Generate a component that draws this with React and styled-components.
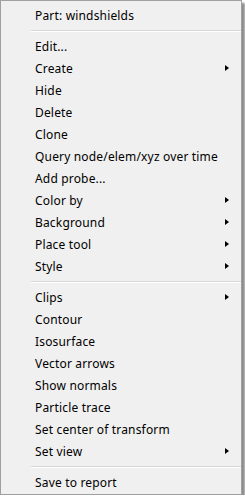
import React from "react";
import styled, { createGlobalStyle } from "styled-components";

const GlobalStyle = createGlobalStyle`
  html, body {
    margin: 0;
    padding: 0;
    background: #ffffff;
  }
`;

const Menu = styled.div`
  width: 242px;
  box-sizing: border-box;
  background: #f0f0f0;
  border: 1px solid #a0a0a0;
  box-shadow: 3px 3px 2px rgba(0, 0, 0, 0.45);
  padding: 3px 0 1px;
  font-family: "Noto Sans", "Open Sans", sans-serif;
  font-size: 12px;
  letter-spacing: 0.17px;
  color: #000000;
  display: flex;
  flex-direction: column;
`;

const Item = styled.div`
  height: 22px;
  display: flex;
  align-items: center;
  justify-content: space-between;
  padding: 0 12px 0 34px;
  white-space: nowrap;
`;

const Arrow = styled.span`
  width: 0;
  height: 0;
  border-top: 3.5px solid transparent;
  border-bottom: 3.5px solid transparent;
  border-left: 4px solid #000000;
`;

const Separator = styled.div`
  height: 9px;
  display: flex;
  flex-direction: column;
  justify-content: center;
  padding-left: 30px;

  &::before {
    content: "";
    display: block;
    height: 1px;
    background: #d7d7d7;
  }
  &::after {
    content: "";
    display: block;
    height: 1px;
    background: #ffffff;
  }
`;

const groups = [
  [{ label: "Part: windshields" }],
  [
    { label: "Edit..." },
    { label: "Create", sub: true },
    { label: "Hide" },
    { label: "Delete" },
    { label: "Clone" },
    { label: "Query node/elem/xyz over time" },
    { label: "Add probe..." },
    { label: "Color by", sub: true },
    { label: "Background", sub: true },
    { label: "Place tool", sub: true },
    { label: "Style", sub: true },
  ],
  [
    { label: "Clips", sub: true },
    { label: "Contour" },
    { label: "Isosurface" },
    { label: "Vector arrows" },
    { label: "Show normals" },
    { label: "Particle trace" },
    { label: "Set center of transform" },
    { label: "Set view", sub: true },
  ],
  [{ label: "Save to report" }],
];

const App = () => {
  return (
    <>
      <GlobalStyle />
      <Menu>
        {groups.map((group, i) => (
          <React.Fragment key={i}>
            {i > 0 && <Separator />}
            {group.map((item) => (
              <Item key={item.label}>
                <span>{item.label}</span>
                {item.sub && <Arrow />}
              </Item>
            ))}
          </React.Fragment>
        ))}
      </Menu>
    </>
  );
};

export default App;
